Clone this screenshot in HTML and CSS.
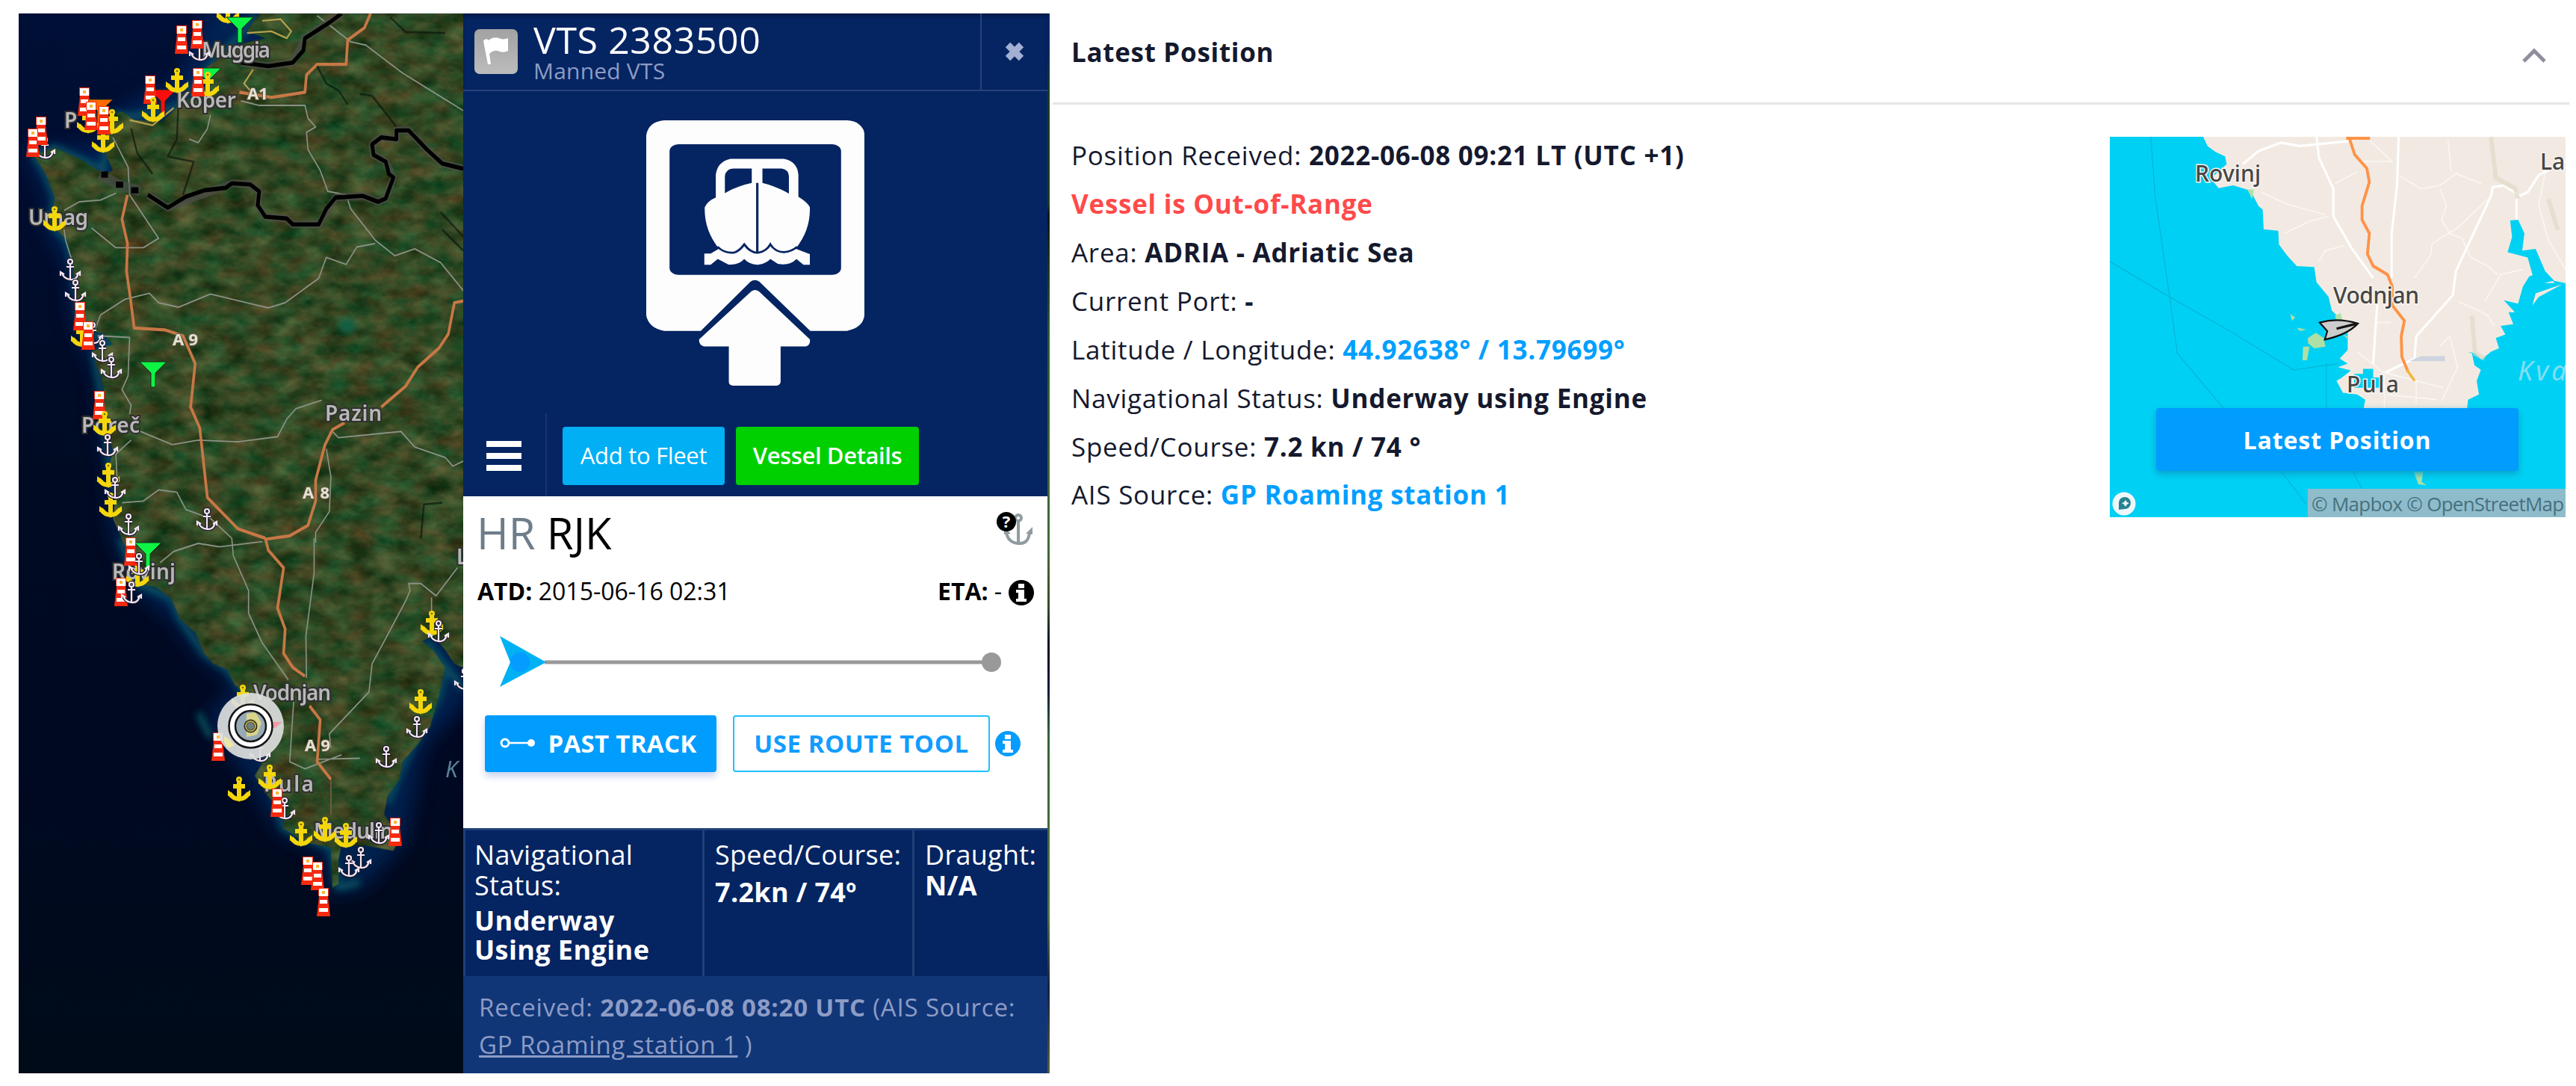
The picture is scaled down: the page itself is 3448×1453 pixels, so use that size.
FILE: index.html
```html
<!DOCTYPE html>
<html lang="en">
<head>
<meta charset="utf-8">
<title>VTS 2383500</title>
<link rel="stylesheet" href="styles.css">
</head>
<body>
<main class="page">
  <section class="live">
    <svg class="sea-map" viewBox="25 18 595 1418" width="595" height="1418">
      <defs>
        <linearGradient id="sea" x1="0" y1="0" x2="0" y2="1">
          <stop offset="0" stop-color="#000f36"/><stop offset=".45" stop-color="#000a22"/><stop offset=".7" stop-color="#000922"/><stop offset="1" stop-color="#000b19"/>
        </linearGradient>
        <filter id="soft" x="-20%" y="-20%" width="140%" height="140%"><feGaussianBlur stdDeviation="14"/></filter>
        <filter id="shore" x="-20%" y="-20%" width="140%" height="140%"><feGaussianBlur stdDeviation="5"/></filter>
        <filter id="terrain" x="0" y="0" width="100%" height="100%" color-interpolation-filters="sRGB">
          <feTurbulence type="fractalNoise" baseFrequency=".03 .05" numOctaves="6" seed="8"/>
          <feColorMatrix values=".4 .1 0 0 -.05  .12 .28 0 0 .085  .1 .2 0 0 -.01  0 0 0 0 1"/>
          <feComposite in2="SourceGraphic" operator="in"/>
        </filter>
        <g id="lh">
          <path fill="#f52a10" d="M-7-19H7V-8H6L9 19H-9L-6-8H-7z"/>
          <path fill="#fff" d="M-6-18H6V-8H-6zM-5-3H5V2H-5zM-6 8H6V13H-6z"/>
          <path fill="#ffb52e" d="M-2-15H2V-11H-2z"/>
        </g>
        <g id="ya">
          <path fill="none" stroke="#f4d60c" stroke-width="6" d="M0-9V14M-8-3H8M-13 6Q-8 14 0 14T13 6"/>
          <circle cy="-12" r="4" fill="#f4d60c"/><path fill="#f4d60c" d="M-15 10V2L-7 8zM15 10V2L7 8zM-4 12H4L0 18z"/>
          <circle cy="-12" r="1.3" fill="#7a6800"/>
        </g>
        <g id="wa">
          <g fill="none" stroke="#1b1b2c" stroke-width="4.5"><circle cy="-11" r="3"/><path d="M0-8V13M-5-4H5M-11 4Q-9 12 0 13T11 4"/></g>
          <g fill="none" stroke="#f5e6f5" stroke-width="2.2"><circle cy="-11" r="3"/><path d="M0-8V13M-5-4H5M-11 4Q-9 12 0 13T11 4M-13 8V3L-8 6M13 8V3L8 6"/></g>
        </g>
        <path id="fn" d="M-18-17H18L3-2V17H-3V-2z" stroke="#10301a" stroke-width="1"/>
      </defs>
      <rect x="25" y="18" width="595" height="1418" fill="url(#sea)"/>
      <g filter="url(#soft)" fill="#022a5c" stroke="#02296a" stroke-width="34" opacity=".75">
        <path transform="scale(.4082 .4655)" d="M1519 39H700L600 250 400 330 350 440 110 445 180 570 165 640 240 760 265 940 340 1080 345 1200 370 1340 380 1500 400 1547H1519z"/>
        <path transform="translate(0 720) scale(.4082 .4675)" d="M395 0L450 130 590 230 670 330 745 375 800 440 700 510 830 680 930 830 1085 885 1090 1000 1180 985 1310 860 1370 590 1519 450V0z"/>
      </g>
      <g filter="url(#shore)" fill="none" stroke="#075a66" stroke-width="22" stroke-linejoin="round" opacity=".8">
        <path transform="scale(.4082 .4655)" d="M840 39L780 110 700 180 580 310 440 335 370 330 345 440 340 490 180 425 110 445 150 500 180 570 165 640 220 690 240 760 265 940 370 990 310 1020 345 1200 360 1340 380 1420"/>
        <path transform="translate(0 720) scale(.4082 .4675)" d="M395 0L450 130 560 170 590 230 670 330 745 375 800 440 850 560 870 630 930 830 1085 885 1110 1000 1180 985M1270 760L1320 650 1440 450 1460 370 1400 300 1519 430M650 500L690 570"/>
      </g>
      <g filter="url(#terrain)">
        <path transform="scale(.4082 .4655)" d="M1519 39H850L810 90 870 110 770 130 700 180 650 210 700 230 640 270 580 310 530 350 440 345 400 320 370 330 350 380 345 440 370 490 340 500 270 460 180 425 110 445 150 500 180 570 165 640 220 690 240 760 250 860 265 940 340 960 370 990 300 1010 330 1080 340 1120 345 1200 340 1240 370 1290 360 1340 380 1420 370 1490 400 1550H1519z"/>
        <path transform="translate(0 720) scale(.4082 .4675)" d="M395-3L430 60 450 130 510 140 560 170 590 230 640 270 670 330 700 360 745 375 770 420 800 440 850 560 870 630 835 680 880 740 930 790 930 830 1000 870 1085 885 1090 1000 1110 990 1110 920 1120 880 1200 880 1290 895 1310 860 1260 790 1270 740 1310 690 1320 640 1370 590 1410 540 1440 450 1460 370 1420 320 1385 295 1420 280 1460 320 1490 360 1519 370V-3z"/>
      </g>
      <circle cx="465" cy="436" r="11" fill="#086044" filter="url(#shore)"/>

      <g transform="scale(.4082 .4655)" fill="none" stroke-linejoin="round">
        <g stroke="#8b9285" stroke-width="4">
          <path d="M1040 45L1150 120 1200 130 1320 210 1519 318M690 330L680 370 650 410 620 400M790 290L850 303H1000L1010 340 1035 365 1005 380 1010 430 1050 490 1075 550 1135 560 1150 600 1230 690 1295 735 1360 715 1445 755 1519 835M1230 700L1170 710 1135 760 1070 740 1045 800 935 870 880 885 690 845 585 883 520 870 490 843 410 860 330 905 310 950M370 395L420 480 425 560 520 685 470 712H380L300 655M210 605L260 580 330 575 380 555M210 660L215 690 240 760M320 965L425 970 420 1080 400 1120 430 1165 425 1190M460 1240L565 1278 650 1265 780 1270 910 1255 940 1205 970 1175 1055 1150M1090 1240L1110 1258 1315 1240 1360 1285 1460 1315 1485 1340 1519 1325M430 1265L380 1305 385 1400M400 1445L470 1440 520 1408 580 1415 610 1465 690 1490 760 1547M1070 1290L1085 1370 1080 1470 1035 1530V1560"/>
        </g>
        <path stroke="#b6a04d" stroke-width="5" d="M860 60L920 55 955 90 940 110 890 90 810 95M830 200L800 240 830 270M425 345L500 360 570 310"/>
        <path stroke="#c77746" stroke-width="9" d="M1215 39L1195 80 1140 115 1135 185 1040 185 1005 215 1000 265 890 280 785 265M418 560L400 630 418 700 415 780 428 860 440 943 540 948 600 965 640 1045 625 1170 655 1230 680 1430 780 1520 870 1547M1519 865L1490 870 1470 960 1440 1000 1370 1055 1330 1110 1250 1170M1130 1215L1090 1235 1065 1280 1035 1380 1035 1440 1010 1510 950 1540 870 1550"/>
        <path stroke="#0b150d" stroke-width="6" opacity=".65" d="M1280 50L1330 92 1460 95M560 110L585 300 580 400 550 450 635 465 600 560M430 370L450 440 500 500M1040 190L1070 240 1110 260 1140 300M1180 270L1220 275 1300 365M1445 610L1519 680M1450 660L1519 720M1450 1445L1390 1450 1380 1547"/>
        <path stroke="#504d4c" stroke-width="22" opacity=".7" d="M1120 39L1000 110 960 180 880 190 790 180M1519 485L1450 470 1400 430 1340 375 1300 375V400L1250 395 1220 415 1225 445 1265 465 1290 510 1265 570 1240 580 1190 563 1100 568 1045 645H960L940 628 870 623 845 590 850 550 820 530 760 527 550 597 485 560"/>
        <path stroke="#000" stroke-width="12" d="M1120 39L1080 65 1000 110 995 145 960 180 880 190 790 180M1519 485L1450 470 1400 430 1340 375 1300 375V400L1250 395 1220 415 1225 445 1265 465 1275 500 1290 510 1265 570 1240 580 1190 563 1100 568 1070 600 1045 645H960L940 628 870 623 845 590 850 550 820 530 760 527 740 540 670 547 610 565 550 597 485 560"/>
        <path stroke="#504d4c" stroke-width="30" opacity=".6" d="M326 502L390 531 460 550"/>
        <path stroke="#000" stroke-width="18" d="M332 502H354M380 531H404M430 547H454"/>
      </g>
      <g transform="translate(0 720) scale(.4082 .4675)" fill="none" stroke-linejoin="round">
        <path stroke="#8b9285" stroke-width="4" d="M525 70L570 38 650 15 720 25 860 10M760 0L765 50 815 150V215L860 300 945 405M1030 0V100L1003 280 1005 400M965 440L950 640 1000 660 1120 620M1085 600L1080 560 1210 440 1220 360 1330 180 1345 150 1340 130 1380 130 1430 165 1500 85M1415 170V210M1040 633L1180 630"/>
        <path stroke="#c77746" stroke-width="9" d="M870 0L880 35 930 85 910 200 935 260 930 330 960 370 1000 395M1015 480L1050 520 1040 640 1085 690"/>
        <path stroke="#7a6040" stroke-width="4" d="M1085 690V790"/>
      </g>
      <g class="place">
        <text x="270" y="77" textLength="92">Muggia</text><text x="236" y="144" textLength="80">Koper</text><text x="86" y="171">P</text>
        <text x="38" y="301" textLength="80">Umag</text><text x="435" y="563" textLength="76">Pazin</text><text x="109" y="579" textLength="78">Poreč</text>
        <text x="150" y="775" textLength="85">Rovinj</text><text x="339" y="937" textLength="104">Vodnjan</text><text x="353" y="1059" textLength="67">Pula</text>
        <text x="420" y="1122" textLength="106">Medulin</text><text x="611" y="755">L</text>
      </g>
      <g class="road">
        <text x="331" y="133">A1</text><text x="231" y="462" textLength="34">A 9</text><text x="405" y="667" textLength="36">A 8</text><text x="408" y="1005" textLength="34">A 9</text>
      </g>
      <text class="gulf" x="596" y="1040">K</text>

      <use href="#ya" x="305" y="14"/><use href="#fn" x="321" y="40" fill="#0df445"/><use href="#fn" x="278" y="108" fill="#0df445"/>
      <use href="#fn" x="218" y="137" fill="#fb0d0d"/><use href="#fn" x="133" y="150" fill="#ff6a00"/>
      <use href="#fn" x="205" y="501" fill="#0df445"/><use href="#fn" x="198" y="743" fill="#0df445"/>
      <use href="#wa" x="267" y="67"/><use href="#wa" x="60" y="198"/><use href="#wa" x="94" y="361"/><use href="#wa" x="101" y="389"/><use href="#wa" x="124" y="446"/>
      <use href="#wa" x="137" y="470"/><use href="#wa" x="149" y="492"/><use href="#wa" x="277" y="695"/>
      <use href="#ya" x="237" y="107"/><use href="#ya" x="278" y="112"/><use href="#ya" x="118" y="161"/><use href="#ya" x="150" y="162"/><use href="#ya" x="138" y="187"/>
      <use href="#ya" x="73" y="292"/><use href="#ya" x="110" y="447"/><use href="#ya" x="145" y="635"/><use href="#ya" x="148" y="675"/>
      <use href="#lh" x="243" y="53"/><use href="#lh" x="264" y="46"/><use href="#lh" x="265" y="110"/><use href="#lh" x="201" y="120"/><use href="#lh" x="113" y="136"/>
      <use href="#lh" x="122" y="155"/><use href="#lh" x="139" y="161"/><use href="#lh" x="55" y="175"/><use href="#lh" x="44" y="191"/><use href="#lh" x="107" y="423"/>
      <use href="#lh" x="118" y="449"/><use href="#lh" x="133" y="542"/>
      <use href="#ya" x="205" y="146"/><use href="#ya" x="140" y="566"/><use href="#wa" x="144" y="596"/><use href="#wa" x="154" y="653"/><use href="#wa" x="172" y="702"/>
      <use href="#ya" x="184" y="768"/><use href="#lh" x="175" y="738"/><use href="#wa" x="186" y="755"/><use href="#lh" x="162" y="792"/><use href="#wa" x="176" y="793"/>
      <use href="#ya" x="578" y="833"/><use href="#wa" x="587" y="845"/><use href="#wa" x="622" y="909"/><use href="#ya" x="563" y="938"/><use href="#wa" x="558" y="973"/>
      <use href="#wa" x="517" y="1013"/><use href="#ya" x="325" y="932"/><use href="#lh" x="292" y="999"/><use href="#ya" x="320" y="1055"/><use href="#ya" x="361" y="1039"/>
      <use href="#wa" x="381" y="1082"/><use href="#lh" x="371" y="1074"/><use href="#ya" x="403" y="1115"/><use href="#ya" x="435" y="1109"/><use href="#ya" x="463" y="1117"/>
      <use href="#wa" x="507" y="1115"/><use href="#lh" x="529" y="1113"/><use href="#wa" x="483" y="1148"/><use href="#wa" x="467" y="1159"/>
      <use href="#lh" x="412" y="1165"/><use href="#lh" x="425" y="1172"/><use href="#lh" x="433" y="1207"/><use href="#wa" x="348" y="1005"/>
      <g>
        <circle cx="335.500" cy="971.500" r="44.500" fill="#dcdedd" opacity=".93"/>
        <circle cx="335.500" cy="971.500" r="24" fill="#98a9b6"/><path d="M330 955l12-2 8 14-6 16-14 3z" fill="#d9d487"/>
        <path d="M362 966h16l-10 8h-6z" fill="#f09aa8"/><path d="M300 985q8 4 14 12l-8 4q-8-6-6-16z" fill="#ece6a8"/>
        <circle cx="335.500" cy="971.500" r="25" fill="none" stroke="#fff" stroke-width="8"/>
        <circle cx="335.500" cy="971.500" r="29" fill="none" stroke="#161616" stroke-width="2.500"/>
        <circle cx="335.500" cy="971.500" r="20.500" fill="none" stroke="#161616" stroke-width="2.500"/>
        <circle cx="335.500" cy="971.500" r="7" fill="#6f7d80" stroke="#25251c" stroke-width="4"/><circle cx="335.500" cy="971.500" r="6.500" fill="none" stroke="#b9ac45" stroke-width="2"/>
      </g>
    </svg>

    <aside class="vessel">
      <header class="vessel-head">
        <span class="flag"><svg viewBox="0 0 58 60" width="58" height="60"><path d="M12 16c2-4 6-3 7-1 6-5 12-4 16-2 4 1 7 0 10-1v17c-4 2-8 2-11 1-5-2-9-2-14 3l2 14h-4z" fill="#fff"/></svg></span>
        <div class="names"><h1>VTS 2383500</h1><p>Manned VTS</p></div>
        <button class="close" aria-label="Close"><svg viewBox="0 0 28 28" width="28" height="28"><path d="M5 5L23 23M23 5L5 23" stroke="#a3afd3" stroke-width="9"/></svg></button>
      </header>
      <div class="picture">
        <svg viewBox="482 372 552 819" preserveAspectRatio="none" width="292" height="355">
          <path fill="#fdfdfd" d="M527 372H990A44 44 0 0 1 1034 418V975Q1030 1012 990 1022H897L768 870Q757 860 746 870L620 1022H527Q489 1014 482 975V418Q488 376 527 372z"/>
          <rect x="541" y="446" width="434" height="403" rx="22" fill="#052462"/>
          <path fill="#fdfdfd" d="M658 610V540Q662 500 695 491H830Q864 498 867 540V608Q890 625 896 640Q898 710 860 768L896 785V818H880L862 800Q845 822 815 815L796 800Q785 815 763 818Q742 816 730 800Q715 820 690 817L663 800 645 818H629V783H645L666 768Q628 710 630 640Q638 620 658 610z"/>
          <path fill="#052462" d="M681 597V545Q683 522 702 521H749V565Q710 575 681 597zM776 521H825Q842 524 843 545V598Q810 575 776 565z"/>
          <path fill="none" stroke="#052462" stroke-width="6" d="M763 565V778M662 762Q680 784 705 780 718 775 730 755 745 780 763 781 785 778 796 755 808 778 830 779 850 777 864 762"/>
          <path fill="#fdfdfd" d="M748 900Q757 891 767 900L896 1048Q898 1066 886 1070H822V1180Q820 1191 810 1191H702Q691 1189 691 1180V1070H628Q614 1064 616 1048z"/>
        </svg>
      </div>
      <div class="actions">
        <button class="menu" aria-label="Menu"><i></i><i></i><i></i></button>
        <button class="btn add">Add to Fleet</button><button class="btn details">Vessel Details</button>
      </div>
      <div class="voyage">
        <div class="ports"><span><em>HR</em> RJK</span>
          <svg viewBox="0 0 48 48" width="48" height="48"><g fill="none" stroke="#8f9ba0" stroke-width="4"><circle cx="29" cy="9" r="4"/><path d="M29 13V43M13 28Q15 42 29 43T44 28"/></g><path d="M10 31V21l9 9zM48 31V21l-9 9z" fill="#8f9ba0"/><circle cx="13" cy="14" r="13" fill="#000"/><text class="mark" x="13" y="22" text-anchor="middle">?</text></svg>
        </div>
        <div class="times"><span><b>ATD:</b> 2015-06-16 02:31</span><span class="eta"><b>ETA:</b> -<svg viewBox="0 0 34 34" width="34" height="34"><circle cx="17" cy="17" r="17" fill="#000"/><path d="M13 5h8v6h-8zM10 13h11v12h3v4H10v-4h3v-8h-3z" fill="#fff"/></svg></span></div>
        <svg class="progress" viewBox="0 0 674 68" width="674" height="68"><path d="M60 34H658" stroke="#999" stroke-width="5"/><circle cx="658" cy="34" r="13" fill="#999"/><path d="M0-1L62 34 0 67 14 34z" fill="#00b1f4"/><ellipse cx="27" cy="34" rx="13" ry="13" fill="#049cff"/></svg>
        <div class="tools">
          <button class="btn track"><svg viewBox="0 0 48 16" width="48" height="16"><path d="M12 8H40" stroke="#fff" stroke-width="2.500"/><circle cx="7" cy="8" r="5" fill="none" stroke="#fff" stroke-width="3"/><circle cx="42" cy="8" r="5" fill="#fff"/></svg><span>PAST TRACK</span></button>
          <button class="btn route">USE ROUTE TOOL</button>
          <svg viewBox="0 0 34 34" width="34" height="34"><circle cx="17" cy="17" r="17" fill="#049cff"/><path d="M13 5h8v6h-8zM10 13h11v12h3v4H10v-4h3v-8h-3z" fill="#fff"/></svg>
        </div>
      </div>
      <div class="facts">
        <div class="nav"><p>Navigational Status:</p><b>Underway<br>Using Engine</b></div>
        <div class="speed"><p>Speed/Course:</p><b>7.2kn / 74º</b></div>
        <div class="draught"><p>Draught:</p><b>N/A</b></div>
      </div>
      <footer class="received"><span>Received: <b>2022-06-08 08:20 UTC</b> (AIS Source:</span><span><a>GP Roaming station 1</a> )</span></footer>
    </aside>
    <div class="map-edge"></div>
  </section>

  <section class="latest">
    <header class="latest-head"><h2>Latest Position</h2><svg viewBox="0 0 32 22" width="32" height="22"><path d="M2 19L16 5 30 19" fill="none" stroke="#8e8e9e" stroke-width="5"/></svg></header>
    <div class="latest-body">
      <div class="report">
        <p>Position Received: <b>2022-06-08 09:21 LT (UTC +1)</b></p>
        <p class="alert"><b>Vessel is Out-of-Range</b></p>
        <p>Area: <b>ADRIA - Adriatic Sea</b></p>
        <p>Current Port: <b>-</b></p>
        <p>Latitude / Longitude: <b class="link">44.92638° / 13.79699°</b></p>
        <p>Navigational Status: <b>Underway using Engine</b></p>
        <p>Speed/Course: <b>7.2 kn / 74 °</b></p>
        <p>AIS Source: <b class="link">GP Roaming station 1</b></p>
      </div>
      <div class="thumb">
        <svg viewBox="103 398 1431 1110" preserveAspectRatio="none" width="610" height="509">
          <path fill="#00d1f4" d="M103 398H1534V1508H103z"/>
          <g fill="none" stroke="#06b4d8" stroke-width="3"><path d="M232 398L245 570 290 860 315 1030 460 1190M103 762L290 865 480 965 680 1078 820 1060M783 1060V1190M640 1373L720 1470M865 1373L895 1425"/></g>
          <path fill="#f2eae2" d="M396 398L410 425 435 442 465 455 470 478 420 520 445 548 490 540 545 555 570 600 583 610 586 668 632 672 634 712 660 745 690 775 745 778 752 822 790 865 800 905 850 950V1020L825 1045 850 1060 820 1070 860 1080 830 1102 815 1110 835 1145 880 1150 905 1165 900 1190H1225L1228 1165 1262 1150 1255 1110 1268 1078 1248 1065 1240 1030 1225 1025 1250 1030 1270 1048 1300 1025 1325 1015 1315 985 1345 975 1330 950 1370 945 1355 910 1375 910 1340 875 1385 885 1400 835 1420 805 1450 795 1470 825 1500 825 1475 800 1460 745 1440 725 1405 735 1395 700 1405 690 1385 645 1362 650 1365 690 1355 735 1395 745 1420 765 1430 800 1480 815 1534 825V398zM1534 825L1440 855 1430 890 1450 865 1534 823z"/>
          <path fill="#00d1f4" d="M1360 642L1385 640 1405 680 1398 730 1440 725 1470 790 1498 818 1445 830 1430 800 1415 750 1352 735 1366 690zM898 1075H930V1100H955V1130H870V1090H898z"/>
          <g fill="#aee0a5"><path d="M535 552H555L550 580zM810 920L828 912 832 930 815 935zM725 985L750 970 775 985 780 1010 745 1015 725 1000zM710 1010H730L722 1050H708zM670 915l15 10-10 10zM690 955l30 5-20 5zM835 975l15 5v8zM1057 1375h30l-5 30 15 10-25-3z"/></g>
          <g fill="none" stroke="#fff" stroke-width="4">
            <path stroke-width="3" opacity=".7" d="M580 560L660 595 780 625M650 680L730 645 790 630M760 760L780 730 840 715M810 535L880 500M920 410L990 470H890M1010 510L1080 550 1140 540 1190 505 1270 535M1165 410L1175 500M1140 550L1160 600 1145 640 1170 680 1210 695 1235 750 1290 775 1320 800M1290 580L1200 660 1115 710 1110 745 1060 810M1280 880L1330 800 1400 785M1200 880L1250 900 1290 920 1310 950M940 940H985M1140 1010L1170 980 1195 1070 1145 1170M880 1025L960 1085 1150 1130M965 1080V1190M1065 1110V1180M970 1150L1130 1165M1470 500L1450 600 1480 700 1534 785"/>
            <path stroke-width="7" d="M520 478L570 440 640 415 700 425 860 410M752 398L760 460 805 550V630L860 720 930 810M1010 398L1005 540 988 680V810M943 880L930 1060M970 1085L1060 1045 1065 980 1180 860 1190 790 1300 570 1305 545 1340 540 1390 570 1415 560 1450 510 1534 470M1380 575V640"/>
          </g>
          <path d="M1300 398l15 120 60 30 10 30M1240 920l10 110 30 15M1480 580l30 90" fill="none" stroke="#ded7c5" stroke-width="14" opacity=".6"/>
          <path d="M1045 1052l35-14h75v15z" fill="#cdd3df"/>
          <path fill="none" stroke="#ff9248" stroke-width="9" d="M845 402H920M855 402L872 450 910 490 918 530 895 600V640L918 680 912 740 930 775 975 800 990 835V890L1028 935 1018 980 1020 1040 1040 1085"/>
          <path d="M1036 1078L1060 1110" stroke="#f5b53a" stroke-width="8"/>
          <path d="M762 940Q820 925 882 943 850 975 778 990L786 965z" fill="#ccc" stroke="#111" stroke-width="5"/><path d="M815 958L875 944" stroke="#111" stroke-width="7"/>
        </svg>
        <svg class="labels" viewBox="2824 183 610 509" width="610" height="509">
          <text x="2938" y="243" textLength="88">Rovinj</text><text x="3123" y="406" textLength="115">Vodnjan</text><text x="3141" y="525" textLength="70">Pula</text><text x="3400" y="227">La</text>
          <text class="kvarner" x="3370" y="509">Kva</text>
          <circle cx="2843" cy="674" r="15.500" fill="#eef8fb"/><circle cx="2844" cy="673" r="8" fill="#28828f"/><path d="M2836 682v-9l8 8z" fill="#28828f"/><path d="M2845 669l2 3 3 1-3 2-2 3-2-3-3-2 3-1z" fill="#eef8fb"/>
        </svg>
        <button class="latest-btn">Latest Position</button>
        <span class="credit">© Mapbox © OpenStreetMap</span>
      </div>
    </div>
  </section>
</main>
</body>
</html>
```
FILE: styles.css
```css
* { box-sizing: border-box; margin: 0; }
body { background: #fff; font-family: "Open Sans", "Noto Sans", sans-serif; color: #14192e; }
svg { display: block; flex: none; }
button { border: 0; padding: 0; background: none; font: inherit; color: inherit; }
.page { display: flex; width: 3448px; height: 1453px; padding: 18px 9px 0 25px; }

.live { display: flex; flex: none; width: 1380px; height: 1418px; margin-right: 4px; overflow: hidden; }
.place text { font: 600 28px "Noto Sans", sans-serif; fill: #b8b8b8; stroke: #303030; stroke-width: 4px; paint-order: stroke; }
.road text { font: 700 22px "Noto Sans", sans-serif; fill: #e3e2d4; stroke: #6a5a45; stroke-width: 2px; paint-order: stroke; }
.gulf { font: italic 30px "Noto Sans", sans-serif; fill: #5b8297; }
.map-edge { flex: 1; background: linear-gradient(#052462 0 3%, #17401f 8% 18%, #0a1a10 19%, #2a5a30 30%, #446a3c 50%, #3a4a2a 56%, #050a28 60%, #10203a 64%, #386038 68%, #50743f 85%, #142040 92%, #5a6038); }

.vessel { display: flex; flex: none; flex-direction: column; width: 782px; background: #052462; color: #fff; }
.vessel-head { display: flex; height: 104px; border-bottom: 2px solid #274279; box-shadow: inset 0 5px 6px -3px #021338; }
.flag { width: 58px; height: 60px; margin: 21px 21px 0 15px; border-radius: 7px; background: linear-gradient(#a2a2a2, #bcbcbc); }
.names { flex: 1; }
.names h1 { margin-top: 2px; font-size: 50px; line-height: 66px; font-weight: 400; letter-spacing: .6px; }
.names p { margin-top: -11px; font-size: 30px; line-height: 40px; color: #8d9cc3; letter-spacing: .2px; }
.close { display: grid; place-items: center; width: 90px; border-left: 2px solid #274279; }
.picture { display: flex; justify-content: center; padding: 39px 0 0; height: 431px; }
.actions { display: flex; height: 111px; }
.menu { display: flex; flex-direction: column; gap: 8px; width: 112px; padding: 37px 0 0 31px; border-right: 2px solid #183571; }
.menu i { width: 47px; height: 8px; background: #fff; }
.btn { display: flex; align-items: center; justify-content: center; border-radius: 4px; white-space: nowrap; }
.actions .btn { height: 78px; margin-top: 18px; padding-bottom: 3px; font-size: 31px; }
.actions .add { width: 217px; margin-left: 21px; background: #00aff4; letter-spacing: -.3px; }
.actions .details { width: 245px; margin-left: 15px; background: #00d000; font-weight: 600; letter-spacing: -.4px; }

.voyage { height: 444px; background: #fff; color: #000; }
.ports { display: flex; justify-content: space-between; height: 96px; padding: 20px 20px 0 18px; font-size: 58px; line-height: 58px; }
.ports em { font-style: normal; color: #6e7d8a; }
.mark { font: 700 22px "Open Sans", sans-serif; fill: #fff; }
.times { display: flex; justify-content: space-between; height: 67px; padding: 3px 18px 0 19px; font-size: 32px; line-height: 56px; }
.eta { display: flex; align-items: center; height: 56px; }
.eta b { margin-right: 8px; }
.eta svg { margin: 4px 0 0 9px; }
.progress { margin: 25px 0 0 49px; overflow: visible; }
.tools { display: flex; align-items: center; margin: 37px 0 0 29px; }
.tools .btn { height: 76px; padding-bottom: 2px; font-size: 33px; font-weight: 700; }
.tools .track { gap: 17px; width: 310px; padding-right: 7px; background: #009dff; color: #fff; box-shadow: 0 6px 10px #ccd5ee; letter-spacing: .3px; }
.tools .route { width: 344px; margin: 0 7px 0 22px; border: 2px solid #1dc2fb; color: #129cff; letter-spacing: .55px; }

.facts { display: flex; height: 198px; border-top: 3px solid #1f4076; font-size: 36px; line-height: 41px; }
.facts div { border-left: 3px solid #1f4076; padding: 12px 0 0 14px; white-space: nowrap; }
.facts .nav { width: 320px; padding-left: 12px; }
.nav p { width: 260px; white-space: normal; letter-spacing: .3px; }
.nav b { display: block; margin-top: 7px; line-height: 39px; letter-spacing: .4px; }
.speed { width: 281px; letter-spacing: .3px; }
.speed b { display: block; margin-top: 9px; }
.draught { flex: 1; letter-spacing: .3px; }
.received { display: flex; flex-direction: column; flex: 1; padding: 17px 0 0 21px; background: #113678; color: #8d9cc5; font-size: 33px; line-height: 50px; letter-spacing: .82px; white-space: nowrap; }
.received a { text-decoration: underline; }

.latest { flex: 1; }
.latest-head { display: flex; justify-content: space-between; align-items: center; height: 122px; padding: 0 31px 16px 25px; border-bottom: 3px solid #e4e5e7; }
.latest-head h2 { font-size: 35px; font-weight: 700; letter-spacing: .7px; }
.latest-head svg { margin-top: 8px; }
.latest-body { display: flex; justify-content: space-between; padding: 43px 5px 0 25px; }
.report { margin-top: -8px; font-size: 35px; line-height: 65px; letter-spacing: .74px; white-space: nowrap; }
.report p:last-child { line-height: 63px; }
.alert { color: #ff4a4a; }
.link { color: #009fff; }
.thumb { position: relative; width: 610px; height: 509px; overflow: hidden; }
.thumb .labels { position: absolute; inset: 0; }
.labels text { font: 500 30px "Noto Sans", sans-serif; fill: #464646; stroke: #f8f4ef; stroke-width: 3px; paint-order: stroke; }
.labels .kvarner { font: italic 36px "Noto Sans", sans-serif; fill: #80def5; stroke: none; letter-spacing: 4px; }
.latest-btn { position: absolute; left: 62px; top: 363px; width: 485px; height: 84px; border-radius: 4px; background: #009dff; color: #fff; font-size: 32px; font-weight: 700; letter-spacing: .9px; box-shadow: 0 4px 10px #0a9fc8; }
.credit { position: absolute; right: 0; bottom: 0; width: 345px; height: 38px; padding-left: 5px; background: #8fbccb; color: #47707f; font-size: 26px; line-height: 41px; letter-spacing: -.75px; white-space: nowrap; }
```
